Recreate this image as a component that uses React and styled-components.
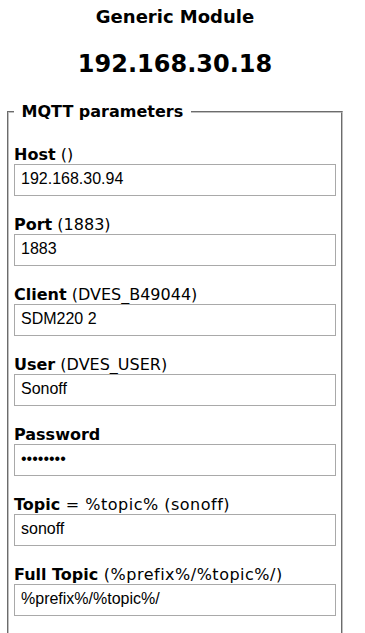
import styled, { createGlobalStyle } from "styled-components";

const GlobalStyle = createGlobalStyle`
  html, body {
    margin: 0;
    padding: 0;
    background: #fff;
    overflow: hidden;
  }
  body {
    font-family: "DejaVu Sans", Verdana, sans-serif;
    color: #000;
  }
`;

const Page = styled.div`
  width: 336px;
  margin-left: 7px;
  padding-top: 6px;
`;

const ModuleName = styled.h3`
  margin: 0;
  font-size: 18px;
  line-height: 22px;
  font-weight: bold;
  text-align: center;
`;

const DeviceAddress = styled.h2`
  margin: 22px 0 0;
  font-size: 24px;
  line-height: 28px;
  font-weight: bold;
  text-align: center;
`;

const Group = styled.fieldset`
  margin: 24px 0 0;
  padding: 24px 5px 80px;
  border: 2px groove #c0c0c0;
  min-width: 0;
  display: flex;
  flex-direction: column;
  gap: 20px;
`;

const GroupTitle = styled.legend`
  padding: 0 2px;
  font-size: 16px;
  line-height: 20px;
  font-weight: bold;
`;

const Field = styled.div`
  display: flex;
  flex-direction: column;
`;

const Label = styled.label`
  font-size: 16px;
  line-height: 18px;
  white-space: nowrap;

  b {
    font-weight: bold;
  }
`;

const Hint = styled.span`
  letter-spacing: ${(p) => (p.$wide ? "0.5px" : "0")};
`;

const TextInput = styled.input`
  box-sizing: border-box;
  width: 322px;
  height: 32px;
  margin: 0;
  padding: 0 6px 2px;
  border: 1px solid #a9a9a9;
  border-radius: 0;
  background: #fff;
  color: #000;
  font-family: "Liberation Sans", Arial, sans-serif;
  font-size: 16px;
  outline: none;
`;

const fields = [
  { name: "Host", hint: " ()", value: "192.168.30.94" },
  { name: "Port", hint: " (1883)", value: "1883" },
  { name: "Client", hint: " (DVES_B49044)", value: "SDM220 2" },
  { name: "User", hint: " (DVES_USER)", value: "Sonoff" },
  { name: "Password", hint: "", value: "********", type: "password" },
  { name: "Topic", hint: " = %topic% (sonoff)", value: "sonoff" },
  { name: "Full Topic", hint: " (%prefix%/%topic%/)", value: "%prefix%/%topic%/" },
];

const App = () => {
  return (
    <>
      <GlobalStyle />
      <Page>
        <ModuleName>Generic Module</ModuleName>
        <DeviceAddress>192.168.30.18</DeviceAddress>
        <Group>
          <GroupTitle>&nbsp;MQTT parameters&nbsp;</GroupTitle>
          {fields.map((f) => (
            <Field key={f.name}>
              <Label>
                <b>{f.name}</b>
                <Hint $wide={f.hint.includes("%")}>{f.hint}</Hint>
              </Label>
              <TextInput type={f.type || "text"} defaultValue={f.value} />
            </Field>
          ))}
        </Group>
      </Page>
    </>
  );
};

export default App;
